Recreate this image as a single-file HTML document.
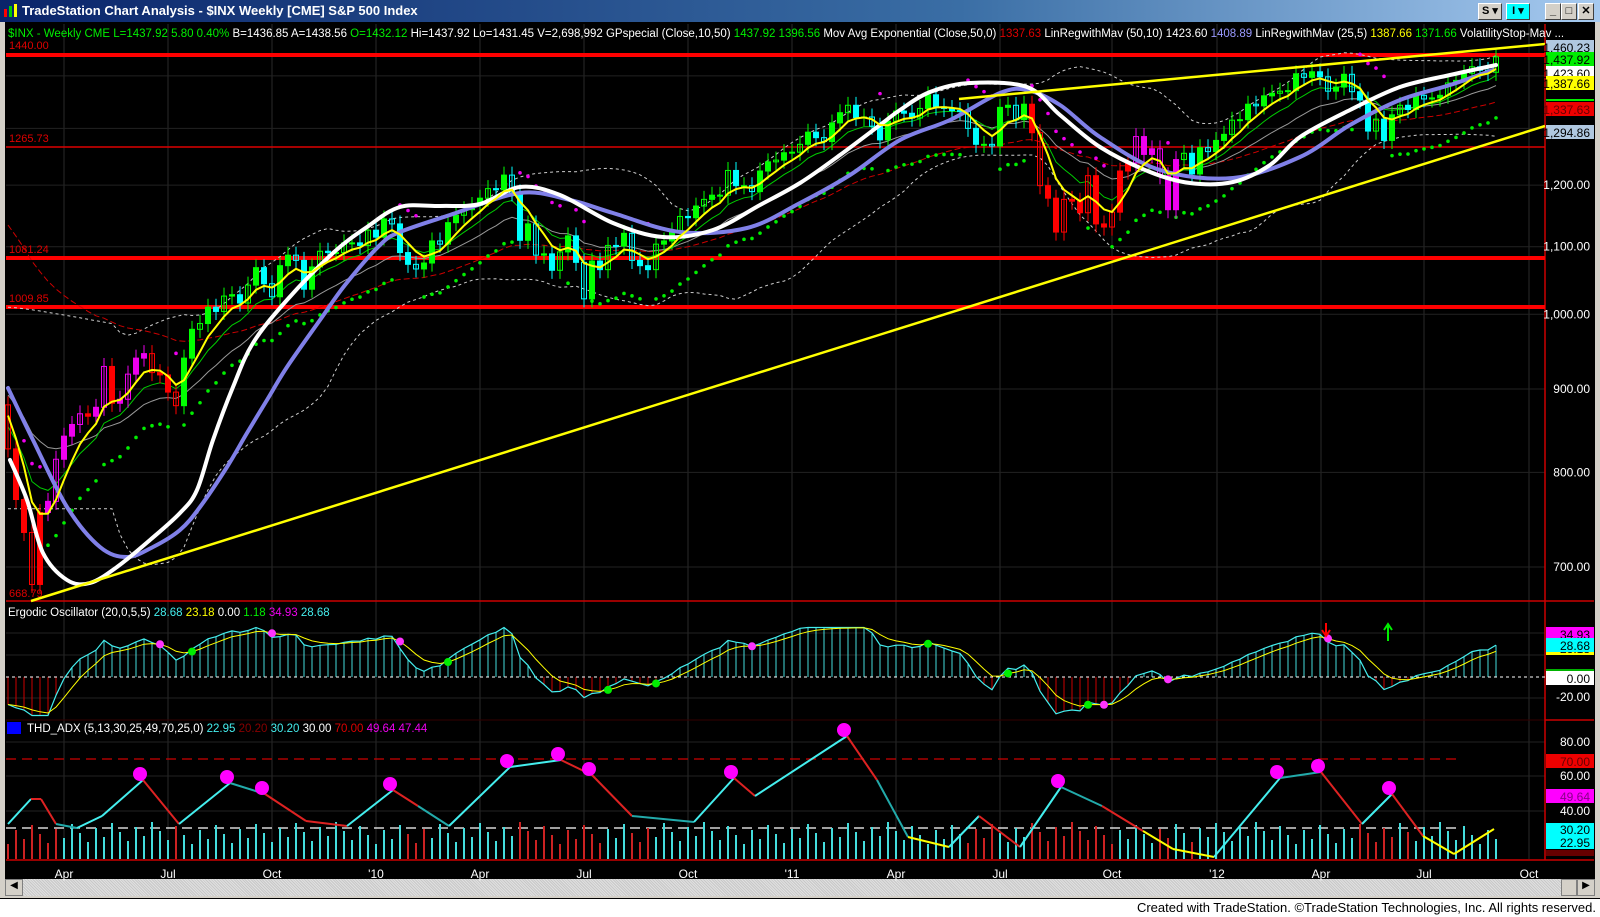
<!DOCTYPE html>
<html><head><meta charset="utf-8">
<style>
html,body{margin:0;padding:0;width:1600px;height:916px;overflow:hidden;background:#d4d0c8;font-family:"Liberation Sans",sans-serif;}
#title{position:absolute;left:0;top:0;width:1600px;height:22px;background:linear-gradient(90deg,#0a246a,#3a6ea5 60%,#a6caf0);}
#title span{position:absolute;left:22px;top:3px;color:#fff;font-weight:bold;font-size:13px;}
#chart{position:absolute;left:5px;top:22px;width:1590px;height:857px;background:#000;}
#scroll{position:absolute;left:5px;top:879px;width:1590px;height:17px;background:repeating-linear-gradient(45deg,#e0e0e0 0 1px,#c8c8c8 1px 2px);}
#foot{position:absolute;left:0;top:898px;width:1600px;height:18px;background:#fff;border-top:1px solid #000;}
#foot span{position:absolute;right:4px;top:1px;font-size:13px;color:#000;}
.btn{position:absolute;top:3px;height:15px;background:#d4d0c8;border:1px solid #fff;border-right-color:#404040;border-bottom-color:#404040;font-size:11px;font-weight:bold;text-align:center;line-height:15px;}
svg text{font-family:"Liberation Sans",sans-serif;}
</style></head><body>
<div id="title"><svg width="16" height="16" style="position:absolute;left:3px;top:3px"><rect x="1" y="6" width="3" height="8" fill="#f00"/><rect x="6" y="3" width="3" height="11" fill="#0c0"/><rect x="11" y="1" width="3" height="13" fill="#ff0"/></svg><span>TradeStation Chart Analysis - $INX Weekly [CME] S&amp;P 500 Index</span>
<div class="btn" style="left:1478px;width:22px">S ▾</div>
<div class="btn" style="left:1506px;width:22px;background:#0ff">I ▾</div>
<div class="btn" style="left:1545px;width:14px">_</div>
<div class="btn" style="left:1561px;width:14px">□</div>
<div class="btn" style="left:1578px;width:14px">✕</div>
</div>
<div id="chart"></div>
<div id="scroll"><div style="position:absolute;left:0;top:0;width:16px;height:15px;background:#d4d0c8;border:1px solid #808080;font-size:10px;text-align:center">◀</div><div style="position:absolute;right:0;top:0;width:16px;height:15px;background:#d4d0c8;border:1px solid #808080;font-size:10px;text-align:center">▶</div><div style="position:absolute;right:18px;top:0;width:14px;height:15px;background:#d4d0c8;border:1px solid #808080"></div></div>
<div id="foot"><span>Created with TradeStation. ©TradeStation Technologies, Inc. All rights reserved.</span></div>
<svg id="s" width="1600" height="916" style="position:absolute;left:0;top:0" xmlns="http://www.w3.org/2000/svg"></svg>
<script>
var C=[827,770,735,683,756,768,815,842,856,869,866,877,929,882,887,919,940,946,921,918,896,879,940,979,987,1010,1004,1026,1028,1016,1042,1068,1044,1025,1071,1087,1079,1036,1069,1093,1091,1091,1106,1106,1102,1126,1115,
1144,1136,1091,1073,1066,1075,1109,1104,1138,1150,1159,1166,1178,1194,1192,1217,1187,1110,1136,1087,1089,1064,1092,1117,1076,1022,1078,1065,1102,1101,1121,1079,1071,1065,1104,1109,1125,1148,1146,1165,1176,1183,1183,1225,1199,1199,1189,1224,1240,1243,1256,1257,
1271,1293,1283,1276,1310,1329,1343,1320,1321,1304,1279,1313,1332,1328,1319,1337,1363,1340,1337,1333,1331,1300,1271,1271,1268,1339,1343,1316,1345,1292,1199,1178,1123,1176,1173,1154,1216,1136,1131,1155,1224,1238,1285,1253,1263,1216,1159,1244,1255,1219,1265,1258,
1278,1289,1315,1316,1345,1342,1361,1366,1370,1371,1404,1397,1408,1398,1370,1378,1403,1369,1353,1295,1317,1278,1325,1343,1335,1362,1355,1357,1362,1386,1391,1405,1418,1411,1407,1438];
var N=C.length,h='';
function X(i){return 1496-8*(N-1-i);}
function Y(p){return 5209.8-708.7*Math.log(p);}
function ema(a,n,seed){var k=2/(n+1),o=[],v=seed||a[0];for(var i=0;i<a.length;i++){v=(i||seed)?v+k*(a[i]-v):a[i];o.push(v);}return o;}
function L(x1,y1,x2,y2,c,w,d){h+='<line x1="'+x1+'" y1="'+y1+'" x2="'+x2+'" y2="'+y2+'" stroke="'+c+'" stroke-width="'+(w||1)+'"'+(d?' stroke-dasharray="'+d+'"':'')+'/>';}
function P(a,f,c,w,d,s0){var s='',st=s0||0;for(var i=st;i<a.length;i++){s+=(i>st?'L':'M')+X(i).toFixed(1)+' '+f(a[i]).toFixed(1);}h+='<path d="'+s+'" fill="none" stroke="'+c+'" stroke-width="'+w+'"'+(d?' stroke-dasharray="'+d+'"':'')+'/>';}
function CR(p,c,w){var s='M'+p[0][0]+' '+p[0][1];for(var i=0;i<p.length-1;i++){var p0=p[i-1]||p[i],p1=p[i],p2=p[i+1],p3=p[i+2]||p2;s+='C'+(p1[0]+(p2[0]-p0[0])/6).toFixed(1)+' '+(p1[1]+(p2[1]-p0[1])/6).toFixed(1)+' '+(p2[0]-(p3[0]-p1[0])/6).toFixed(1)+' '+(p2[1]-(p3[1]-p1[1])/6).toFixed(1)+' '+p2[0]+' '+p2[1];}h+='<path d="'+s+'" fill="none" stroke="'+c+'" stroke-width="'+w+'" stroke-linecap="round"/>';}
function T(x,y,t,c,s,a){h+='<text x="'+x+'" y="'+y+'" fill="'+c+'" font-size="'+(s||11)+'"'+(a?' text-anchor="'+a+'"':'')+'>'+t+'</text>';}
var qx=[64,168,272,376,480,584,688,792,896,1000,1112,1217,1321,1424,1529],ql=['Apr','Jul','Oct',"'10",'Apr','Jul','Oct',"'11",'Apr','Jul','Oct',"'12",'Apr','Jul','Oct'];
qx.forEach(function(x,i){L(x,24,x,859,'#2a2a2a');T(x,878,ql[i],'#fff',12,'middle');});
[700,800,900,1000,1100,1200,1300,1400].forEach(function(p){L(6,Y(p),1545,Y(p),'#222');});
[633,655,698,742,776,811].forEach(function(y){L(6,y,1545,y,'#222');});
L(6,601,1545,601,'#c00',1.5);L(6,720,1545,720,'#300');L(1545,24,1545,860,'#c00',1.5);L(6,860,1594,860,'#c00',1.5);L(1545,601,1594,601,'#c00',1.5);L(1545,720,1594,720,'#c00',1.5);
L(6,55,1545,55,'#f00',4);L(6,147,1545,147,'#d00',1.5);L(6,258,1545,258,'#f00',4);L(6,307,1545,307,'#f00',4);
T(9,49,'1440.00','#d00',11);T(9,142,'1265.73','#d00',11);T(9,253,'1081.24','#d00',11);T(9,302,'1009.85','#d00',11);T(9,597,'668.79','#d00',11);
var e10=ema(ema(C,3,880),3,880),e50=ema(C,40,1150),g=ema(C,9,860),gr=ema(C,18,900);
var bu=[],bd=[];for(var i=0;i<N;i++){var s=0,q=0,n=0;for(var j=Math.max(0,i-19);j<=i;j++){s+=C[j];n++;}var m=s/n;for(var j=Math.max(0,i-19);j<=i;j++){q+=(C[j]-m)*(C[j]-m);}var sd=Math.sqrt(q/n);sd=Math.max(sd,m*0.025);var u=m+2*sd,d=m-2*sd;if(i<14){u=1010-i*2;d=760;}bu.push(u);bd.push(d);}
bu=ema(bu,4);bd=ema(bd,4);
P(bu,Y,'#ccc',1,'3,3');P(bd,Y,'#ccc',1,'3,3');
P(e50,Y,'#c00',1,'6,3');P(gr,Y,'#999',1);P(g,Y,'#0c0',1);
var gm=ema(C,8);
for(var i=2;i<N;i++){var above=C[i]>gm[i]*0.985;var v=above?gm[i]*0.94:gm[i]*1.05;h+='<circle cx="'+X(i)+'" cy="'+Y(v)+'" r="1.8" fill="'+(above?'#0e0':'#e0e')+'"/>';}
for(var i=0;i<N;i++){var o=i?C[i-1]:880,c=C[i],hi=Math.max(o,c)*1.012,lo=Math.min(o,c)*0.988,x=X(i);
var col=c>=o?'#0f0':'#0ff';if(i<22)col=c>=o?'#e0e':'#f00';if(i<5)col='#f00';if(i>=128&&i<141)col='#f00';if(i>=141&&i<147)col='#e0e';
L(x,Y(hi),x,Y(lo),col,1);var yt=Y(Math.max(o,c)),yb=Y(Math.min(o,c));var fill=(i%3==0)?'none':col;
h+='<rect x="'+(x-2.5)+'" y="'+yt+'" width="5" height="'+Math.max(1,yb-yt)+'" fill="'+fill+'" stroke="'+col+'"/>';}
CR([[8,388],[33,440],[67,507],[100,547],[127,557],[153,547],[180,530],[200,507],[227,467],[247,433],[267,400],[287,367],[320,320],[345,285],[380,245],[400,232],[450,215],[520,193],[570,200],[613,213],[680,232],[747,228],[800,203],[850,175],[900,140],[950,120],[1000,93],[1027,90],[1060,105],[1100,137],[1160,170],[1233,178],[1300,157],[1350,125],[1400,100],[1450,85],[1493,70]],'#8080e8',4);
CR([[10,460],[27,500],[43,553],[67,580],[90,583],[117,567],[150,540],[180,513],[197,490],[213,440],[233,387],[253,343],[287,300],[333,253],[367,227],[400,207],[440,206],[480,204],[520,187],[560,195],[613,223],[663,237],[713,230],[760,205],[800,183],[840,155],[880,125],[900,110],[930,92],[970,83],[1027,87],[1060,115],[1100,147],[1150,172],[1190,183],[1233,182],[1270,165],[1300,137],[1350,110],[1400,87],[1450,75],[1496,65]],'#fff',4);
P(e10,Y,'#ff0',2);
L(31,601,1545,126,'#ff0',2.5);L(959,99,1545,44,'#ff0',2.5);
var m=[0],am=[0];for(var i=1;i<N;i++){m.push(C[i]-C[i-1]);am.push(Math.abs(C[i]-C[i-1]));}
var a1=ema(ema(m,20),5),b1=ema(ema(am,20),5),er=a1.map(function(v,i){return i?Math.max(-35,Math.min(45,100*v/(b1[i]||1))):-25;});
er[0]=-25;er[1]=-28;er[2]=-30;var sg=ema(er,5);function EY(v){return 677-v*1.1;}
for(var i=0;i<N;i++){L(X(i),677,X(i),EY(er[i]),er[i]>=0?'#4dd':'#c00',1);}
L(6,677,1545,677,'#fff',1,'3,3');P(er,EY,'#4ee',1.2);P(sg,EY,'#ff0',1);
for(var i=3;i<N;i++){if((er[i]-sg[i])*(er[i-1]-sg[i-1])<0&&i%2)h+='<circle cx="'+X(i)+'" cy="'+EY(sg[i])+'" r="4" fill="'+(er[i]>sg[i]?'#0e0':'#f3f')+'"/>';}
h+='<path d="M1326 623v11M1322 630l4 6 4-6" stroke="#f00" stroke-width="2" fill="none"/><path d="M1388 641v-15M1384 630l4-6 4 6" stroke="#0e0" stroke-width="2" fill="none"/>';
var kp=[[8,824],[31,799],[41,799],[56,824],[77,828],[102,816],[143,780],[179,824],[230,783],[265,794],[306,821],[347,826],[393,790],[418,806],[449,826],[510,767],[561,760],[592,775],[632,816],[694,822],[734,778],[755,796],[847,736],[877,780],[908,837],[949,847],[979,816],[1020,847],[1061,787],[1102,806],[1143,831],[1173,849],[1214,857],[1280,778],[1321,772],[1362,824],[1392,794],[1423,836],[1454,854],[1494,829]];
L(6,759,1460,759,'#c00',1.2,'10,6');L(6,828,1460,828,'#fff',1.2,'10,6');
for(var i=0;i<N;i++){var x=X(i),above=C[i]>gr[i],hh=15+((i*37)%23);L(x,859,x,859-hh,above?'#4dd':'#c22',2);}
for(var j=1;j<kp.length;j++){var a=kp[j-1],b=kp[j],col=b[1]<a[1]?'#4ee':'#d22';if(a[1]>826&&b[1]>826)col='#ff0';if(j%5==4&&col!='#ff0')col='#2aa';L(a[0],a[1],b[0],b[1],col,2);}
[[143,780],[230,783],[265,794],[393,790],[510,767],[561,760],[592,775],[734,778],[847,736],[1061,787],[1280,778],[1321,772],[1392,794]].forEach(function(p){h+='<circle cx="'+(p[0]-3)+'" cy="'+(p[1]-6)+'" r="7" fill="#f0f"/>';});
h+='<text x="8" y="37" font-size="11.5"><tspan fill="#0e0">$INX - Weekly  CME  L=1437.92  5.80  0.40%</tspan><tspan fill="#fff">  B=1436.85  A=1438.56  </tspan><tspan fill="#0e0">O=1432.12</tspan><tspan fill="#fff">  Hi=1437.92  Lo=1431.45  V=2,698,992  GPspecial (Close,10,50)  </tspan><tspan fill="#0e0">1437.92  1396.56</tspan><tspan fill="#fff">  Mov Avg Exponential (Close,50,0)  </tspan><tspan fill="#d00">1337.63</tspan><tspan fill="#fff">  LinRegwithMav (50,10)  </tspan><tspan fill="#fff">1423.60  </tspan><tspan fill="#99f">1408.89</tspan><tspan fill="#fff">  LinRegwithMav (25,5)  </tspan><tspan fill="#ff0">1387.66</tspan><tspan fill="#0e0">  1371.66</tspan><tspan fill="#fff">  VolatilityStop-Mav ...</tspan></text>';
h+='<text x="8" y="616" font-size="11.5"><tspan fill="#fff">Ergodic Oscillator (20,0,5,5)  </tspan><tspan fill="#4ee">28.68  </tspan><tspan fill="#ff0">23.18  </tspan><tspan fill="#fff">0.00  </tspan><tspan fill="#0e0">1.18  </tspan><tspan fill="#e0e">34.93  </tspan><tspan fill="#4ee">28.68</tspan></text>';
h+='<rect x="7" y="722" width="14" height="12" fill="#00f"/><text x="27" y="732" font-size="11.5"><tspan fill="#fff">THD_ADX (5,13,30,25,49,70,25,0)  </tspan><tspan fill="#4ee">22.95  </tspan><tspan fill="#800">20.20  </tspan><tspan fill="#4ee">30.20  </tspan><tspan fill="#fff">30.00  </tspan><tspan fill="#d00">70.00  </tspan><tspan fill="#e0e">49.64  </tspan><tspan fill="#e0e">47.44</tspan></text>';
[[1200,'1,200.00'],[1100,'1,100.00'],[1000,'1,000.00'],[900,'900.00'],[800,'800.00'],[700,'700.00']].forEach(function(a){T(1590,Y(a[0])+4,a[1],'#fff',12,'end');});
function B(y,t,bg,fg){h+='<rect x="1546" y="'+(y-7)+'" width="48" height="14" fill="'+bg+'"/>';T(1590,y+5,t,fg,12,'end');}
B(47,'1,460.23','#b0c8e0','#000');B(73,'1,423.60','#fff','#000');B(59,'1,437.92','#0e0','#000');B(83,'1,387.66','#ff0','#000');L(1546,100,1594,100,'#0e0',2);B(109,'1,337.63','#e00','#600');B(132,'1,294.86','#b0c8e0','#000');
T(1590,637,'40.00','#fff',12,'end');B(634,'34.93','#f0f','#000');B(648,'23.18','#ff0','#000');B(645,'28.68','#0ff','#000');L(1546,670,1594,670,'#0e0',1.5);B(678,'0.00','#fff','#000');T(1590,701,'-20.00','#fff',12,'end');
T(1590,746,'80.00','#fff',12,'end');B(761,'70.00','#e00','#600');T(1590,780,'60.00','#fff',12,'end');B(796,'49.64','#f0f','#808');T(1590,815,'40.00','#fff',12,'end');
h+='<rect x="1546" y="823" width="48" height="26" fill="#0ff"/>';T(1590,834,'30.20','#000',12,'end');T(1590,847,'22.95','#000',12,'end');h+='<rect x="1546" y="850" width="48" height="6" fill="#600"/>';
document.getElementById('s').innerHTML=h;
</script>
</body></html>
